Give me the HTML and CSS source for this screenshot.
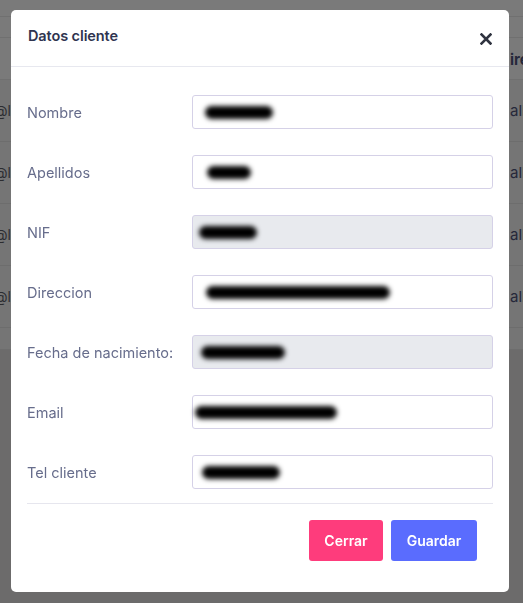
FILE: index.html
```html
<!DOCTYPE html>
<html lang="es">
<head>
<meta charset="utf-8">
<title>Datos cliente</title>
<link rel="stylesheet" href="styles.css">
</head>
<body>
<div class="page">
  <div class="band band-top"></div>
  <div class="band band-mid"></div>
  <div class="thead"><span class="cell-r bold">ire</span></div>
  <div class="trow"><span class="cell-l">@li</span><span class="cell-r">all</span></div>
  <div class="trow"><span class="cell-l">@li</span><span class="cell-r">all</span></div>
  <div class="trow"><span class="cell-l">@li</span><span class="cell-r">all</span></div>
  <div class="trow"><span class="cell-l">@li</span><span class="cell-r">all</span></div>
  <div class="trow trow-short"></div>
</div>

<div class="modal">
  <div class="modal-header">
    <h5 class="modal-title">Datos cliente</h5>
    <button class="close" type="button" aria-label="Cerrar">
      <svg width="12" height="12" viewBox="0 0 12 12"><path d="M1.5 1.5 L10.5 10.5 M10.5 1.5 L1.5 10.5" stroke="#2f3340" stroke-width="2.6" stroke-linecap="square" fill="none"/></svg>
    </button>
  </div>
  <div class="modal-body">
    <div class="row"><label class="lbl">Nombre</label><div class="field"><span class="scribble" style="width:68px;margin-left:12px"></span></div></div>
    <div class="row"><label class="lbl">Apellidos</label><div class="field"><span class="scribble" style="width:44px;margin-left:14px"></span></div></div>
    <div class="row"><label class="lbl">NIF</label><div class="field disabled"><span class="scribble" style="width:58px;margin-left:6px"></span></div></div>
    <div class="row"><label class="lbl">Direccion</label><div class="field"><span class="scribble" style="width:184px;margin-left:13px"></span></div></div>
    <div class="row"><label class="lbl">Fecha de nacimiento:</label><div class="field disabled"><span class="scribble" style="width:84px;margin-left:8px"></span></div></div>
    <div class="row"><label class="lbl">Email</label><div class="field"><span class="scribble" style="width:142px;margin-left:2px"></span></div></div>
    <div class="row"><label class="lbl">Tel cliente</label><div class="field"><span class="scribble" style="width:78px;margin-left:9px"></span></div></div>
    <div class="divider"></div>
  </div>
  <div class="modal-footer">
    <button class="btn btn-pink" type="button">Cerrar</button>
    <button class="btn btn-blue" type="button">Guardar</button>
  </div>
</div>
</body>
</html>
```

FILE: styles.css
```css
html, body {
  margin: 0;
  padding: 0;
}
body {
  background: #6c6b6b;
  font-family: Inter, "Noto Sans", sans-serif;
  overflow: hidden;
  width: 523px;
  height: 603px;
}
.page {
  background: #7a7a7a;
}
.band {
  border-bottom: 1px solid #707070;
}
.band-top { height: 16px; }
.band-mid { height: 20px; }
.thead {
  height: 42px;
  border-bottom: 1px solid #707070;
  display: flex;
  align-items: center;
  justify-content: flex-end;
  padding-top: 2px;
  box-sizing: border-box;
}
.trow {
  height: 61px;
  border-bottom: 1px solid #6d6d6d;
  background: #757575;
  display: flex;
  align-items: center;
  justify-content: space-between;
}
.trow-short { height: 21px; }
.cell-l {
  font-size: 14px;
  color: #2c2c30;
  margin-left: -6px;
  white-space: nowrap;
}
.cell-r {
  font-size: 15px;
  color: #25283a;
  width: 13px;
  white-space: nowrap;
}
.bold { font-weight: 700; }

.modal {
  position: fixed;
  left: 11px;
  top: 10px;
  width: 498px;
  height: 582px;
  background: #fff;
  border-radius: 5px;
  display: flex;
  flex-direction: column;
  box-sizing: border-box;
}
.modal-header {
  height: 57px;
  box-sizing: border-box;
  border-bottom: 1px solid #e7e8ef;
  display: flex;
  justify-content: space-between;
  align-items: flex-start;
  padding: 16px 17px 0 17px;
}
.modal-title {
  margin: 0;
  font-size: 14.5px;
  line-height: 20px;
  font-weight: 600;
  color: #2f3450;
  letter-spacing: -0.1px;
}
.close {
  border: 0;
  background: none;
  padding: 0;
  margin-top: 7px;
  width: 12px;
  height: 12px;
  display: block;
}
.close svg { display: block; }
.modal-body {
  padding: 28px 16px 0 16px;
  display: flex;
  flex-direction: column;
  gap: 26px;
}
.row {
  display: flex;
  align-items: center;
  height: 34px;
}
.lbl {
  width: 165px;
  font-size: 14.5px;
  color: #676d8c;
}
.field {
  width: 301px;
  height: 34px;
  box-sizing: border-box;
  border: 1px solid #d5d1e7;
  border-radius: 3px;
  background: #fff;
  display: flex;
  align-items: center;
}
.field.disabled {
  background: #e8eaee;
}
.scribble {
  display: block;
  height: 13px;
  border-radius: 7px;
  background: #000;
  filter: blur(2.5px);
}
.divider {
  height: 1px;
  background: #e6e6ee;
  margin-top: -12px;
}
.modal-footer {
  display: flex;
  justify-content: flex-end;
  gap: 8px;
  padding: 16px 32px 0 0;
}
.btn {
  border: 0;
  border-radius: 3px;
  height: 41px;
  font-family: Inter, "Noto Sans", sans-serif;
  font-size: 14px;
  font-weight: 600;
  color: #fff;
  padding: 0;
}
.btn-pink {
  width: 74px;
  background: #fe3c7c;
}
.btn-blue {
  width: 86px;
  background: #5a6cfe;
}
```
